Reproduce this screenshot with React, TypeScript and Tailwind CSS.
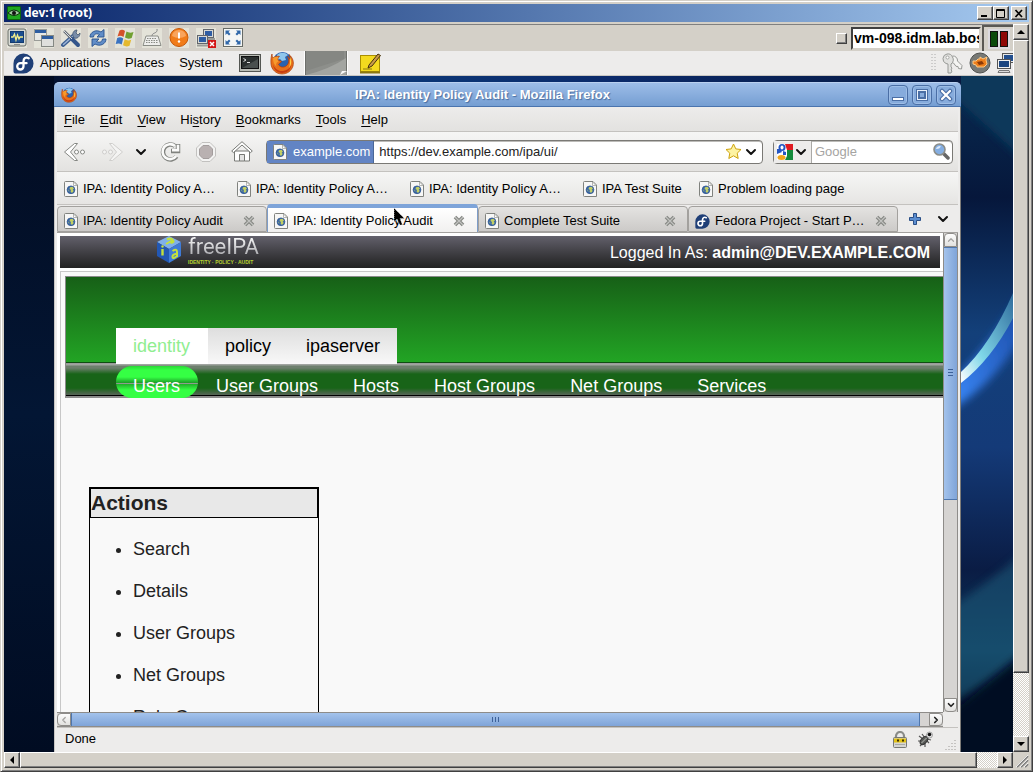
import type { ReactNode } from "react";
import { ChevronDown, ChevronLeft, ChevronRight, ChevronUp } from "lucide-react";

const MENUS = ["File", "Edit", "View", "History", "Bookmarks", "Tools", "Help"];

const BOOKMARKS = [
  { label: "IPA: Identity Policy A…", width: "w-[173px]" },
  { label: "IPA: Identity Policy A…", width: "w-[173px]" },
  { label: "IPA: Identity Policy A…", width: "w-[173px]" },
  { label: "IPA Test Suite", width: "w-[116px]" },
  { label: "Problem loading page", width: "w-[150px]" },
];

const SUB_TABS = ["User Groups", "Hosts", "Host Groups", "Net Groups", "Services"];

const ACTIONS = ["Search", "Details", "User Groups", "Net Groups", "Role Groups"];

const RAISED =
  "bg-[#d4d0c8] border border-t-white border-l-white border-r-[#404040] border-b-[#404040] shadow-[inset_-1px_-1px_0_#808080]";

const DITHER =
  "bg-[repeating-conic-gradient(#ffffff_0_25%,#d4d0c8_0_50%)] bg-[length:2px_2px]";

function PageIcon() {
  return (
    <svg width="14" height="16" viewBox="0 0 14 16" className="shrink-0">
      <path d="M1.5.5h8.500l3.500 3.500v11.500H1.500a1 1 0 0 1-1-1v-13a1 1 0 0 1 1-1z" fill="#f7f7f6" stroke="#80827e" />
      <path d="M9.500 1v3.500h3.500z" fill="#fff" stroke="#a3a5a1" strokeWidth=".8" />
      <circle cx="7" cy="8.800" r="3.900" fill="#3b68a8" stroke="#264f8a" strokeWidth=".7" />
      <path d="M6 6.200l2.500-.4 1.500 1.700-1.300 1 1 1.500-1.700 2-1.500-1.500.5-1.500-1.500-1z" fill="#c3cf63" />
      <path d="M4 8.500l1.200 1v1.500z" fill="#c3cf63" />
    </svg>
  );
}

function FirefoxIcon({ size }: { size: number }) {
  return (
    <svg width={size} height={size} viewBox="0 0 24 24" className="shrink-0">
      <circle cx="12.500" cy="10.500" r="9.500" fill="#2a62b0" />
      <path d="M7 4c3-3 8-3 11 0l-3 2 1 3-4 1-2-2-3 1z" fill="#8fc6ec" />
      <path
        d="M2 3c0 2 .5 3 1 4C5 5 8 5 9.500 5.500 8 6.500 7.500 8 8 9c1 1 3 .5 3.500 1.500-.5 1.500-2.500 1.500-3 3 1 2.500 5 3.500 7.500 1.500 3-2 3.500-6 1.500-9.500 1.500 1 2.500 2 3 3.500 0-2-.5-4-1.500-5.500C23 7 24 11 23 15c-1.500 5-6 8-11 8C6 23 1.500 18.500 1 13 .7 9 1 6 2 3z"
        fill="#e8701a"
        stroke="#a83a0a"
        strokeWidth=".7"
      />
      <path d="M3 13c1 4 5 7.500 10 7 4-.4 7-3 8.500-6.500-.5 5-4.500 8.500-9.500 8.500s-9-4-9-9z" fill="#c63d12" />
      <path d="M20 6c2 4 1.500 8-1 11 1-3 1.300-6 1-11z" fill="#ffd44a" />
      <path d="M3 7c2-1.500 4-1.500 5.500-1C7 8 7 9.500 9 10c-2 1-4 3-2 6-3-2-4-5-4-9z" fill="#f79a2c" />
    </svg>
  );
}

function FedoraIcon({ size }: { size: number }) {
  return (
    <svg width={size} height={size} viewBox="0 0 22 22" className="shrink-0">
      <path d="M11 .500a10.500 10.500 0 1 1 0 21H2.500a2 2 0 0 1-2-2V11A10.500 10.500 0 0 1 11 .500z" fill="#1f3f77" />
      <path
        d="M16.500 5.500c-3.200-1.700-5.500.1-5.500 3.300v5.200a3.300 3.300 0 1 1-3.300-3.300h6.500"
        fill="none"
        stroke="#fff"
        strokeWidth="2.400"
        strokeLinecap="round"
      />
    </svg>
  );
}

function ToolIcon({ label, children }: { label: string; children: ReactNode }) {
  return (
    <button type="button" aria-label={label} className="size-5 bg-[#e4e3d9]">
      <svg width="20" height="20" viewBox="0 0 20 20">
        {children}
      </svg>
    </button>
  );
}

function ViewerToolbar() {
  return (
    <div className="flex h-[26px] shrink-0 items-center bg-[#d4d0c8] pl-[3px]">
      <div className="flex flex-1 gap-[7px]">
        <ToolIcon label="Connection status">
          <rect x="1" y="1" width="18" height="17" rx="2" fill="#d8dbd5" stroke="#666a64" />
          <rect x="3.500" y="3.500" width="13" height="11" fill="#1c4f91" stroke="#123a70" />
          <path d="M4 9h2l1.500-3 1.500 6 1.500-5 1.500 4 1-2h3" fill="none" stroke="#f5ef8a" strokeWidth="1.300" />
          <path d="M7 16.500h6" stroke="#888" />
        </ToolIcon>
        <ToolIcon label="New connection">
          <rect x=".5" y="1.500" width="12" height="11" fill="#e7e7e5" stroke="#9a9c98" />
          <rect x="1" y="2" width="11" height="3" fill="#2d5ca0" />
          <rect x="7.500" y="7.500" width="12" height="11" fill="#dfdfdd" stroke="#858884" />
          <rect x="8" y="8" width="11" height="3" fill="#2d5ca0" />
        </ToolIcon>
        <ToolIcon label="Options">
          <path d="M2 17L12 8" stroke="#3d5f91" strokeWidth="4" strokeLinecap="round" />
          <path d="M2.500 16.500L12 8" stroke="#9db5d8" strokeWidth="1.500" strokeLinecap="round" />
          <path d="M12 8c-1-3 1-6 4-6l-1 3 2 2 2-2c0 4-3 6-6 5z" fill="#788da9" stroke="#42556f" strokeWidth=".8" />
          <path d="M3 3l8 8" stroke="#666d75" strokeWidth="2.500" />
          <path d="M11 11l6 6" stroke="#34568b" strokeWidth="4" strokeLinecap="round" />
          <path d="M3 3l8 8" stroke="#d7dce2" />
        </ToolIcon>
        <ToolIcon label="Refresh">
          <path d="M2 9c0-5 6-8 11-5l3-2.500V9H9l2.500-2.500C8 5 6 6 5.500 9z" fill="#618dc7" stroke="#28518d" strokeWidth=".9" />
          <path d="M18 11c0 5-6 8-11 5l-3 2.500V11h7l-2.500 2.500c3.500 1.500 5.500.5 6-2.500z" fill="#618dc7" stroke="#28518d" strokeWidth=".9" />
        </ToolIcon>
        <ToolIcon label="Send Windows key">
          <path d="M4.500 2.500q3-1.500 5.500.5L8.500 9q-3-2-6-.5z" fill="#d4522b" />
          <path d="M11.500 3.500q3 2 7 .5l-1.800 6q-3.700 1.500-6.700-.5z" fill="#71a032" />
          <path d="M2.200 10q3-1.500 6 .4L6.700 16.500q-2.700-1.800-6-.5z" fill="#3b73c1" />
          <path d="M9.700 11.300q3 2 6.500.5l-1.700 6q-3.300 1.500-6.500-.5z" fill="#e5b92f" />
        </ToolIcon>
        <ToolIcon label="Send keys">
          <path d="M10 8c0-4 6-2 5-7" fill="none" stroke="#888" />
          <path d="M4 8h12l3 9.500H1z" fill="#eeeeec" stroke="#8a8c86" />
          <path d="M5 10.500h10M4 12.500h12M4 14.500h12" stroke="#8a8c86" strokeDasharray="1.500 1" />
        </ToolIcon>
        <ToolIcon label="Ctrl-Alt-Del">
          <circle cx="10" cy="9.500" r="9" fill="#f17c19" stroke="#c45608" />
          <path d="M3 8a7 6 0 0 1 14 0q-7 4-14 0z" fill="#f9a45c" />
          <path d="M10 4.500v6" stroke="#fff" strokeWidth="2" />
          <circle cx="10" cy="13.500" r="1.200" fill="#fff" />
        </ToolIcon>
        <ToolIcon label="Disconnect">
          <rect x="7.500" y="1.500" width="10" height="8" fill="#d8dad6" stroke="#62666c" />
          <rect x="9" y="3" width="7" height="5" fill="#2f5da3" />
          <rect x="1.500" y="7.500" width="10" height="8" fill="#d8dad6" stroke="#62666c" />
          <rect x="3" y="9" width="7" height="5" fill="#2f5da3" />
          <path d="M1 17.500h11M12 11h7" stroke="#9a9c98" strokeWidth="2" />
          <rect x="12" y="12" width="8" height="8" fill="#d31616" />
          <path d="M14 14l4 4m0-4l-4 4" stroke="#fff" strokeWidth="1.500" />
        </ToolIcon>
        <ToolIcon label="Full screen">
          <rect x=".5" y=".5" width="19" height="18" fill="#f4f6f5" stroke="#666a66" />
          <path
            d="M2.500 2.500h4.500l-1.500 1.500 2 2-1.500 1.500-2-2-1.500 1.500zM17.500 2.500h-4.500l1.500 1.500-2 2 1.500 1.500 2-2 1.500 1.500zM2.500 16.500h4.500l-1.500-1.500 2-2-1.500-1.500-2 2-1.500-1.500zM17.500 16.500h-4.500l1.500-1.500-2-2 1.500-1.500 2 2 1.500-1.500z"
            fill="#2f67a9"
          />
        </ToolIcon>
      </div>
      <button type="button" aria-label="Toggle host box" className={`size-[11px] ${RAISED}`} />
      <input
        aria-label="Host"
        defaultValue="vm-098.idm.lab.bos"
        className="ml-1 h-[23px] w-[130px] border-2 border-t-[#404040] border-r-[#d4d0c8] border-b-[#d4d0c8] border-l-[#404040] bg-white pl-px text-[14px] font-bold text-black outline-none"
      />
      <div className="ml-px flex h-full w-[31px] items-center justify-center border-t-2 border-l-2 border-[#5a5853]">
        <svg width="22" height="20" viewBox="0 0 22 20">
          <rect width="22" height="20" fill="#dcdadf" />
          <rect x="2.500" y="2.500" width="7" height="15" fill="#0c4a0c" stroke="#111" />
          <rect x="12.500" y="2.500" width="7" height="15" fill="#8e0808" stroke="#111" />
        </svg>
      </div>
    </div>
  );
}

function GnomePanel() {
  return (
    <div className="flex h-[25px] shrink-0 items-center border-b border-[#c9c7c3] bg-[#edeceb] pl-[9px] text-[13px] text-black">
      <FedoraIcon size={21} />
      <nav className="ml-[6px] flex gap-[15px]">
        <button type="button">Applications</button>
        <button type="button">Places</button>
        <button type="button">System</button>
      </nav>
      <svg width="22" height="18" viewBox="0 0 22 18" className="ml-[17px] shrink-0">
        <rect x=".5" y=".5" width="21" height="17" fill="#babdb6" stroke="#555753" />
        <rect x="2.500" y="2.500" width="17" height="12" fill="#2b302f" stroke="#111" />
        <path d="M3 14L19 5v9z" fill="#4a504e" />
        <path d="M4.500 4.500l2.500 1.500-2.500 1.500M8 8.500h3" fill="none" stroke="#e0e0e0" />
      </svg>
      <div className="ml-[9px]">
        <FirefoxIcon size={24} />
      </div>
      <svg width="44" height="24" viewBox="0 0 44 24" className="ml-[10px] shrink-0">
        <rect width="44" height="24" fill="#8d8f8b" />
        <path d="M2 24Q26 18 42 7v17z" fill="#a3a5a1" />
        <path d="M2 0h38v8Q20 14 2 20z" fill="#858783" />
        <path d="M.5 0v24M43.500 0v24" stroke="#fff" />
        <path d="M1.500 0v24M42.500 0v20" stroke="#6e706c" />
        <path d="M36 24l2-4 5 0z" fill="#f8f8f8" />
      </svg>
      <svg width="24" height="23" viewBox="0 0 24 23" className="ml-[10px] shrink-0">
        <rect x="2.500" y="3.500" width="19" height="16" fill="#f4da1f" stroke="#a98e02" />
        <path d="M2 20.500h20" stroke="#8d7810" strokeWidth="2" />
        <path d="M5 17h9" stroke="#8d7810" />
        <path d="M11 13L20 2l2.500 1.500L14 14l-4 2z" fill="#c99a4b" stroke="#44310c" />
      </svg>
      <div className="flex-1" />
      <svg width="5" height="18" viewBox="0 0 5 18" className="mr-[5px]">
        <path d="M1 0v18M4 0v18" stroke="#aaa" strokeDasharray="1 2" />
      </svg>
      <svg width="22" height="21" viewBox="0 0 22 21" className="mr-[6px]">
        <path d="M11.500 3a4.500 4.500 0 0 1 5 5l4.500 4.500-.5 3.500-3-.5-.5-2-2-.2-2.500-3.300a4.500 4.500 0 0 1-4-2" fill="#f4f4f2" stroke="#979996" />
        <path
          d="M6 1a5 5 0 0 0-1 9.500l2 .5v9h3l1-2-1-1 1-2-1-1v-3a5 5 0 0 0 1.500-7A5 5 0 0 0 6 1z"
          fill="#e1e1df"
          stroke="#979996"
        />
        <circle cx="6.500" cy="4.500" r="1.500" fill="#fff" stroke="#979996" strokeWidth=".8" />
      </svg>
      <svg width="22" height="22" viewBox="0 0 22 22" className="mr-[6px]">
        <circle cx="11" cy="11" r="10" fill="#777975" stroke="#50524f" />
        <path d="M4 9h3l2-2h2V5l3 2 4-2-1 3 1 4-3 3H8l-1-2-3-1z" fill="#ee7f1b" stroke="#ffca83" />
        <path d="M8 10l5-1 2 3-5 1z" fill="#8b3a08" />
      </svg>
      <svg width="16" height="20" viewBox="0 0 16 20">
        <rect x="5.500" y=".5" width="12" height="9" fill="#e8e8e6" stroke="#555" />
        <rect x="7" y="2" width="9" height="6" fill="#234f8e" />
        <rect x=".5" y="6.500" width="13" height="9" fill="#f1f1ef" stroke="#555" />
        <rect x="2" y="8" width="10" height="6" fill="#1c4680" />
        <path d="M2 17.500h10l1 2H1z" fill="#ddd" stroke="#777" />
      </svg>
    </div>
  );
}

function Wallpaper() {
  return (
    <svg
      className="absolute inset-y-0 right-0 h-full w-[52px]"
      viewBox="0 0 52 676"
      preserveAspectRatio="none"
    >
      <defs>
        <linearGradient id="sky" x1="0" y1="0" x2="0" y2="1">
          <stop offset="0" stopColor="#082c52" />
          <stop offset=".18" stopColor="#06173b" />
          <stop offset=".38" stopColor="#13407a" />
          <stop offset=".55" stopColor="#143a78" />
          <stop offset=".73" stopColor="#0a1c44" />
          <stop offset=".85" stopColor="#0d3c5c" />
          <stop offset=".94" stopColor="#020d24" />
          <stop offset="1" stopColor="#010b20" />
        </linearGradient>
        <linearGradient id="arc" x1="0" y1="1" x2="1" y2="0">
          <stop offset="0" stopColor="#ffffff" />
          <stop offset=".35" stopColor="#7fd6e8" />
          <stop offset="1" stopColor="#2f6c9c" />
        </linearGradient>
        <linearGradient id="glow" x1="0" y1="1" x2="1" y2="0">
          <stop offset="0" stopColor="#3d8dff" />
          <stop offset="1" stopColor="#153f95" />
        </linearGradient>
        <filter id="soft" x="-20%" y="-20%" width="140%" height="140%">
          <feGaussianBlur stdDeviation="4" />
        </filter>
      </defs>
      <rect width="52" height="676" fill="url(#sky)" />
      <path d="M-15 -15H70V90L-15 14z" fill="#07385a" filter="url(#soft)" />
      <path d="M-15 312Q30 270 70 200V245Q35 310-15 336z" fill="url(#glow)" filter="url(#soft)" />
      <path d="M0 296Q30 268 52 217V242Q30 284 0 307z" fill="url(#arc)" />
      <path d="M-15 535Q30 505 70 470V570Q30 605-15 630z" fill="#1d5878" opacity=".6" filter="url(#soft)" />
      <path d="M-15 642L70 572V690H-15z" fill="#020c22" filter="url(#soft)" />
    </svg>
  );
}

function FirefoxTitleBar() {
  const button =
    "flex size-5 items-center justify-center rounded-[4px] border border-[#4a6ea5] bg-[#86abdc] shadow-[inset_0_0_0_1px_#9dbde6]";
  return (
    <div className="flex h-[25px] shrink-0 items-center rounded-t-[5px] border-t border-b border-t-[#b9d0f0] border-b-[#4a74ae] bg-linear-to-b from-[#9dbde8] to-[#759ed2] pr-[5px] pl-[7px]">
      <FirefoxIcon size={16} />
      <h1 className="flex-1 text-center text-[13px] font-bold text-white [text-shadow:1px_1px_1px_#466c9f]">
        IPA: Identity Policy Audit - Mozilla Firefox
      </h1>
      <div className="flex gap-1">
        <button type="button" aria-label="Minimize window" className={button}>
          <svg width="14" height="14" viewBox="0 0 14 14">
            <rect x="1.500" y="9.500" width="11" height="3" fill="#fff" stroke="#4a6ea5" />
          </svg>
        </button>
        <button type="button" aria-label="Maximize window" className={button}>
          <svg width="14" height="14" viewBox="0 0 14 14" fill="none">
            <rect x="2.500" y="2.500" width="9" height="9" stroke="#4a6ea5" strokeWidth="3" />
            <rect x="2.500" y="2.500" width="9" height="9" stroke="#e9f1fb" />
            <rect x="4.500" y="4.500" width="5" height="5" stroke="#4a6ea5" />
          </svg>
        </button>
        <button type="button" aria-label="Close window" className={button}>
          <svg width="14" height="14" viewBox="0 0 14 14">
            <path d="M3 3l8 8m0-8l-8 8" stroke="#4a6ea5" strokeWidth="4.500" strokeLinecap="round" />
            <path d="M3 3l8 8m0-8l-8 8" stroke="#fff" strokeWidth="2.200" strokeLinecap="round" />
          </svg>
        </button>
      </div>
    </div>
  );
}

function MenuBar() {
  return (
    <nav className="flex h-[25px] shrink-0 items-center gap-[15px] border-b border-[#c4c2bf] bg-linear-to-b from-[#edeceb] to-[#e3e2e0] pt-px pl-[7px]">
      {MENUS.map((menu) => {
        const at = menu === "History" ? 2 : 0;
        return (
          <button key={menu} type="button">
            {menu.slice(0, at)}
            <span className="underline underline-offset-2">{menu[at]}</span>
            {menu.slice(at + 1)}
          </button>
        );
      })}
    </nav>
  );
}

function NavBar() {
  return (
    <div className="flex h-10 shrink-0 items-center border-b border-[#c4c2bf] bg-linear-to-b from-[#f6f6f5] to-[#e3e2e0] pr-[5px] pl-[7px]">
      <button type="button" aria-label="Back">
        <svg width="22" height="20" viewBox="0 0 22 20" fill="#fff" stroke="#868884">
          <path d="M10.500 1.500h3L6.500 10l7 8.500h-3L.5 10z" />
          <circle cx="12.500" cy="10" r="2" />
          <circle cx="18.500" cy="10" r="2" />
        </svg>
      </button>
      <button type="button" aria-label="Forward" className="ml-[15px]">
        <svg width="22" height="20" viewBox="0 0 22 20" fill="#f4f4f3" stroke="#cfcecc">
          <path d="M11.500 1.500h-3l7 8.500-7 8.500h3L21.500 10z" />
          <circle cx="9.500" cy="10" r="2" />
          <circle cx="3.500" cy="10" r="2" />
        </svg>
      </button>
      <button type="button" aria-label="History menu" className="ml-[10px]">
        <ChevronDown size={16} strokeWidth={3} color="#111" />
      </button>
      <button type="button" aria-label="Reload" className="ml-[11px]">
        <svg width="21" height="20" viewBox="0 0 21 20">
          <path d="M15 4a7.500 7.500 0 1 0 1.500 10.500M18 2v7h-7" fill="none" stroke="#80827e" strokeWidth="4.500" />
          <path d="M15 4a7.500 7.500 0 1 0 1.200 10M18 2.800v5.500h-6" fill="none" stroke="#fbfbfa" strokeWidth="2.600" />
        </svg>
      </button>
      <button type="button" aria-label="Stop" className="ml-[15px]">
        <svg width="20" height="20" viewBox="0 0 20 20">
          <path d="M6 .500h8L19.500 6v8L14 19.500H6L.5 14V6z" fill="#f3f3f2" stroke="#c2c1bf" />
          <path d="M7 3.500h6L16.500 7v6L13 16.500H7L3.500 13V7z" fill="#b9b1b1" stroke="#a39d9d" />
        </svg>
      </button>
      <button type="button" aria-label="Home" className="ml-[15px]">
        <svg width="22" height="21" viewBox="0 0 22 21" fill="#fff" stroke="#777975">
          <path d="M3.500 10h15v10h-5v-6h-5v6h-5z" />
          <path d="M11 .700l10.300 9.300-1.800 1.600L11 4l-8.500 7.600L.700 10z" />
          <path d="M8.500 20v-6.500h5V20z" fill="#e4e4e3" />
        </svg>
      </button>
      <div className="ml-[13px] flex h-6 flex-1 items-center rounded-[4px] border border-[#7a7975] bg-white pr-[3px] shadow-[inset_0_1px_0_#bcbbb8]">
        <span className="flex h-full items-center gap-[6px] border-r border-[#4a6797] bg-[#6284c4] pr-[3px] pl-[6px] text-white">
          <PageIcon />
          example.com
        </span>
        <input
          aria-label="Location"
          defaultValue="https://dev.example.com/ipa/ui/"
          className="w-0 flex-1 bg-transparent pl-[5px] text-[#222] outline-none"
        />
        <svg width="17" height="17" viewBox="0 0 17 17">
          <path
            d="M8.500 1l2.300 4.900 5.200.6-3.800 3.700 1 5.300-4.700-2.700-4.700 2.700 1-5.300L1 6.500l5.200-.6z"
            fill="#fdf3a3"
            stroke="#cda20c"
          />
        </svg>
        <ChevronDown size={16} strokeWidth={3} color="#111" className="ml-px" />
      </div>
      <div className="ml-[10px] flex h-6 w-[180px] items-center rounded-[4px] border border-[#7a7975] bg-white pr-[2px] shadow-[inset_0_1px_0_#bcbbb8]">
        <button
          type="button"
          aria-label="Search engine"
          className="flex h-full items-center border-r border-[#aaa9a6] bg-[#edeceb] pr-[2px] pl-[3px]"
        >
          <svg width="16" height="16" viewBox="0 0 16 16">
            <rect width="16" height="16" fill="#fff" />
            <path d="M8 0h8v6H10z" fill="#e01b22" />
            <path d="M10 6h6v10H8l2-4z" fill="#138a3b" />
            <path d="M0 5h3l2 3-5 2z" fill="#2456c4" />
            <ellipse cx="5" cy="3.500" rx="3.500" ry="3.500" fill="#2456c4" />
            <ellipse cx="5" cy="3.500" rx="1.500" ry="2" fill="#fff" />
            <path d="M6 7l3 1v3H6z" fill="#2456c4" />
            <ellipse cx="4.500" cy="13.500" rx="4" ry="2.500" fill="#f2a71b" />
          </svg>
          <ChevronDown size={16} strokeWidth={3} color="#111" />
        </button>
        <input
          aria-label="Search the web"
          placeholder="Google"
          className="w-0 flex-1 bg-transparent pl-[3px] outline-none placeholder:text-[#a5a4a2]"
        />
        <svg width="17" height="17" viewBox="0 0 17 17">
          <path d="M10 10l5 5" stroke="#666" strokeWidth="3.500" strokeLinecap="round" />
          <circle cx="6.500" cy="6.500" r="5.500" fill="#84aee2" stroke="#8b8d89" strokeWidth="1.600" />
          <path d="M3 6a3.500 3.500 0 0 1 5-2.500q-2 3-5 2.500z" fill="#dceafb" />
        </svg>
      </div>
    </div>
  );
}

function CloseTab() {
  return (
    <svg width="12" height="12" viewBox="0 0 12 12" className="shrink-0">
      <path d="M2 2l8 8m0-8l-8 8" stroke="#858783" strokeWidth="3.600" />
      <path d="M2 2l8 8m0-8l-8 8" stroke="#c2c3c0" strokeWidth="1.200" />
    </svg>
  );
}

function Tab({ label, icon, active }: { label: string; icon: ReactNode; active?: boolean }) {
  return (
    <button
      type="button"
      role="tab"
      aria-selected={!!active}
      className={
        active
          ? "relative flex h-[28px] w-[211px] items-center rounded-t-[4px] border-x border-t-4 border-x-[#7d9cc8] border-t-[#7ea4d9] bg-linear-to-b from-white to-[#f1f0ef] px-[6px] pt-px"
          : "flex h-[26px] w-[210px] items-center rounded-t-[4px] border border-[#a3a19e] bg-linear-to-b from-[#e4e3e1] to-[#cccac8] px-[6px] pt-1"
      }
    >
      {icon}
      <span className="ml-[5px] w-[160px] text-left whitespace-nowrap">{label}</span>
      <CloseTab />
      {active && (
        <svg width="12" height="20" viewBox="0 0 12 20" className="absolute top-0 left-[125px]">
          <path d="M1 0v14l3-3 3 6h2.500L7 10.500h4.500z" fill="#000" stroke="#fff" strokeWidth=".6" strokeDasharray="1 1" />
        </svg>
      )}
    </button>
  );
}

function TabStrip() {
  return (
    <div className="flex h-[28px] shrink-0 items-end border-b border-[#a3a19e] bg-[#edeceb]">
      <div role="tablist" className="flex items-end">
        <Tab label="IPA: Identity Policy Audit" icon={<PageIcon />} />
        <Tab label="IPA: Identity Policy Audit" icon={<PageIcon />} active />
        <Tab label="Complete Test Suite" icon={<PageIcon />} />
        <Tab label="Fedora Project - Start P…" icon={<FedoraIcon size={15} />} />
      </div>
      <button type="button" aria-label="New tab" className="mb-[7px] ml-[11px]">
        <svg width="12" height="12" viewBox="0 0 12 12">
          <path d="M4.500.500h3v4h4v3h-4v4h-3v-4h-4v-3h4z" fill="#5c8ed0" stroke="#2b4f86" />
        </svg>
      </button>
      <button type="button" aria-label="List all tabs" className="mb-[5px] ml-[14px]">
        <ChevronDown size={16} strokeWidth={3} color="#111" />
      </button>
    </div>
  );
}

function FreeIpaLogo() {
  return (
    <div className="flex items-start">
      <svg width="26" height="28" viewBox="0 0 26 28">
        <path d="M13 0l12 6-12 7L1 6z" fill="#7fb0ea" />
        <path d="M1 6l12 7v14L1 20z" fill="#2257b4" />
        <path d="M25 6l-12 7v14l12-7z" fill="#3f7bd6" />
        <path d="M10 8l7-4M11 3.500q4-2 6 .5t-2.500 3" fill="none" stroke="#c3e03c" strokeWidth="2" />
        <path d="M6.500 13v6.500" stroke="#c3e03c" strokeWidth="2.400" />
        <circle cx="6.500" cy="10.500" r="1.200" fill="#c3e03c" />
        <path d="M16.500 15q4.500-3 4.500 1v5M21 17.500q-5 1-4.500 3.500t4.500-1" fill="none" stroke="#c3e03c" strokeWidth="2" />
      </svg>
      <div className="ml-[6px] flex flex-col">
        <span className="bg-linear-to-b from-white to-[#a0a0a5] bg-clip-text font-['Roboto',sans-serif] text-[22px] leading-[22px] text-transparent">
          freeIPA
        </span>
        <span className="mt-px text-[5px] leading-[6px] font-bold whitespace-nowrap text-[#b7d22f]">
          IDENTITY · POLICY · AUDIT
        </span>
      </div>
    </div>
  );
}

function WebPage() {
  return (
    <main className="min-w-0 flex-1 overflow-hidden bg-white p-[3px] text-[18px] text-[#222]">
      <header className="flex h-8 items-start bg-linear-to-b from-[#63616c] to-[#222222] pr-[10px] pl-24">
        <FreeIpaLogo />
        <p className="flex-1 text-right text-[16px] leading-[34px] text-white">
          Logged In As: <strong>admin@DEV.EXAMPLE.COM</strong>
        </p>
      </header>
      <div className="mt-[3px] -mr-[3px] border-t border-l border-[#c8c8c8] bg-[#f9f9f9] pt-1 pl-1">
        <div className="border-t border-l border-[#8a8a8a]">
          <div className="flex h-[87px] items-end bg-[linear-gradient(#176017,#22a424_85px,#0f4d12_85px,#0f4d12_86px,#9a9a9a_86px)] pl-[50px]">
            <ul className="flex h-9 bg-linear-to-b from-[#dedede] to-[#f8f8f8] leading-9 text-black">
              <li className="bg-white pr-[18px] pl-[17px] text-[#90ee90]">
                <a href="#identity">identity</a>
              </li>
              <li className="pr-[18px] pl-[17px]">
                <a href="#policy">policy</a>
              </li>
              <li className="px-[17px]">
                <a href="#ipaserver">ipaserver</a>
              </li>
            </ul>
          </div>
          <div className="flex h-[34px] items-end bg-[linear-gradient(#a0a4a0_1px,#6d7f6d_2px,#6d7f6d_4px,#186418_10px,#186418_24px,#586458_31px,#000_31px,#000_32px,#8c8c8c_32px)] pl-[50px]">
            <ul className="flex h-8 leading-[40px] text-white">
              <li className="h-8 rounded-full bg-[linear-gradient(#2ad636,#35ff44_4px,#35ff44_11px,#1d9a28_17px,#8f9a8f_17px,#8f9a8f_18px,#1fae2a_18px,#35ff44_24px)] pr-[18px] pl-[17px]">
                <a href="#users">Users</a>
              </li>
              {SUB_TABS.map((tab) => (
                <li key={tab} className="pr-[17px] pl-[18px]">
                  <a href="#sub">{tab}</a>
                </li>
              ))}
            </ul>
          </div>
        </div>
        <section className="mt-[89px] ml-6 w-[230px] border border-black">
          <h2 className="border border-black bg-[#e8e8e8] text-[21px] leading-[28px] font-bold">Actions</h2>
          <ul className="list-disc pt-[10px] pl-[43px] leading-[42px]">
            {ACTIONS.map((action) => (
              <li key={action}>
                <a href="#action">{action}</a>
              </li>
            ))}
          </ul>
        </section>
      </div>
    </main>
  );
}

const GTK_BUTTON =
  "flex shrink-0 items-center justify-center border border-[#8e8c89] bg-linear-to-b from-[#fdfdfd] to-[#e2e1df]";

function FirefoxWindow() {
  return (
    <div className="relative flex min-h-0 flex-1 flex-col text-[13px] text-black">
      <FirefoxTitleBar />
      <div className="flex min-h-0 flex-1 flex-col border-r border-l border-r-[#7d7b78] border-l-[#c9c7c4] bg-[#edeceb] px-[2px]">
        <MenuBar />
        <NavBar />
        <nav className="flex h-[33px] shrink-0 items-center border-b border-[#c4c2bf] bg-linear-to-b from-[#f6f6f5] to-[#e6e5e3] pt-px pl-[7px]">
          {BOOKMARKS.map((bookmark, i) => (
            <a key={i} href="#bookmark" className={`flex items-center gap-[5px] whitespace-nowrap ${bookmark.width}`}>
              <PageIcon />
              {bookmark.label}
            </a>
          ))}
        </nav>
        <TabStrip />
        <div className="flex min-h-0 flex-1">
          <WebPage />
          <div className="flex w-[15px] flex-col border-x border-[#8e8c89] bg-[#d6d4d2]">
            <button type="button" aria-label="Scroll up" className={`h-[14px] rounded-t-[4px] ${GTK_BUTTON}`}>
              <ChevronUp size={10} strokeWidth={3} color="#a5a4a2" />
            </button>
            <div className="flex min-h-0 flex-1 flex-col">
              <div className="flex h-[56%] items-center justify-center border-y border-[#4f77ae] bg-linear-to-r from-[#a4c3ec] to-[#7fa4d8]">
                <svg width="5" height="8" viewBox="0 0 5 8">
                  <path d="M0 .500h5M0 3.500h5M0 6.500h5" stroke="#3d6199" />
                </svg>
              </div>
            </div>
            <button type="button" aria-label="Scroll down" className={`h-[14px] rounded-b-[4px] ${GTK_BUTTON}`}>
              <ChevronDown size={10} strokeWidth={4} color="#222" />
            </button>
          </div>
        </div>
        <div className="mr-[15px] flex h-[15px] shrink-0 border-y border-[#8e8c89] bg-[#d6d4d2]">
          <button type="button" aria-label="Scroll left" className={`w-[14px] rounded-l-[4px] ${GTK_BUTTON}`}>
            <ChevronLeft size={10} strokeWidth={3} color="#a5a4a2" />
          </button>
          <div className="flex flex-1">
            <div className="flex w-[99%] items-center justify-center border-x border-[#4f77ae] bg-linear-to-b from-[#a4c3ec] to-[#7fa4d8]">
              <svg width="8" height="5" viewBox="0 0 8 5">
                <path d="M.5 0v5M3.500 0v5M6.500 0v5" stroke="#3d6199" />
              </svg>
            </div>
          </div>
          <button type="button" aria-label="Scroll right" className={`w-[14px] rounded-r-[4px] ${GTK_BUTTON}`}>
            <ChevronRight size={10} strokeWidth={4} color="#222" />
          </button>
        </div>
        <footer className="flex h-[25px] shrink-0 items-center border-t border-[#c4c2bf] pb-[2px] pl-2">
          <span className="flex-1">Done</span>
          <svg width="16" height="17" viewBox="0 0 16 17">
            <path d="M4 8V5a4 4 0 0 1 8 0v3" fill="none" stroke="#8a8c88" strokeWidth="2.200" />
            <rect x="1.500" y="6.500" width="13" height="10" rx="1" fill="#d6d6d3" stroke="#777975" />
            <path d="M2 8.500h12M2 10.500h12" stroke="#e3c214" strokeWidth="2" />
            <path d="M5 9.500h2M10 9.500h2" stroke="#3b3206" strokeWidth="2" />
            <path d="M3 13.500h10" stroke="#a9aaa7" />
          </svg>
          <svg width="17" height="17" viewBox="0 0 17 17" className="ml-[9px]">
            <path d="M2 5l4 3M1 10h4M3 15l3-3M8 16v-4M12 12l-2-2M5 3l3 4M14 9l-4-1" stroke="#555" strokeWidth="1.200" />
            <ellipse cx="7" cy="9.500" rx="2.800" ry="4.800" transform="rotate(42 7 9.500)" fill="#5a5c59" stroke="#333" />
            <path d="M4.500 12l5-5" stroke="#b5b7b3" />
            <circle cx="12.500" cy="4" r="3" fill="#e2e2e2" stroke="#777" strokeWidth=".6" />
            <circle cx="12.500" cy="3.500" r="1.800" fill="#111" />
          </svg>
          <svg width="11" height="11" viewBox="0 0 11 11" className="mt-[10px] mr-[2px] ml-[11px]">
            <path d="M.5 10.500h11M3.500 7.500h8M6.500 4.500h5M9.500 1.500h2" stroke="#9c9a97" strokeDasharray="1 2" />
          </svg>
        </footer>
      </div>
    </div>
  );
}

function ViewerTitleBar() {
  const button = `flex h-[14px] w-4 items-center justify-center ${RAISED}`;
  return (
    <div className="mb-[2px] flex h-[18px] shrink-0 items-center bg-linear-to-r from-[#0a246a] to-[#a6caf0] pr-[2px] pl-[3px]">
      <svg width="14" height="14" viewBox="0 0 14 14">
        <rect x=".5" y=".5" width="13" height="13" rx="1" fill="#1fa81f" stroke="#0b650b" />
        <path d="M1 7q6-6 12 0-6 5-12 0z" fill="#9fc79f" stroke="#0c2e0c" />
        <circle cx="7" cy="7" r="2" fill="#111" />
      </svg>
      <span className="ml-[3px] flex-1 font-['Noto_Sans',sans-serif] text-[12px] leading-[18px] font-bold text-white">
        dev:1 (root)
      </span>
      <button type="button" aria-label="Minimize" className={button}>
        <svg width="10" height="9" viewBox="0 0 10 9">
          <rect x="1" y="6" width="6" height="2" />
        </svg>
      </button>
      <button type="button" aria-label="Maximize" className={button}>
        <svg width="10" height="9" viewBox="0 0 10 9">
          <path d="M.5.500h8v8h-8zM.5 1.500h8" fill="none" stroke="#000" />
        </svg>
      </button>
      <button type="button" aria-label="Close" className={`ml-[2px] ${button}`}>
        <svg width="10" height="9" viewBox="0 0 10 9">
          <path d="M1.500 1l6.500 7M8 1L1.500 8" stroke="#000" strokeWidth="1.700" />
        </svg>
      </button>
    </div>
  );
}

export default function App() {
  const arrow = `flex size-4 shrink-0 items-center justify-center ${RAISED}`;
  return (
    <div className="flex h-screen w-full flex-col overflow-hidden border border-t-[#d4d0c8] border-r-[#404040] border-b-[#404040] border-l-[#d4d0c8] bg-[#d4d0c8] p-[3px] font-['Liberation_Sans',Arial,sans-serif] shadow-[inset_1px_1px_0_#fff,inset_-1px_-1px_0_#808080]">
      <ViewerTitleBar />
      <div className="flex min-h-0 flex-1">
        <div className="flex min-w-0 flex-1 flex-col border-t border-[#808080]">
          <ViewerToolbar />
          <GnomePanel />
          <div className="relative flex min-h-0 flex-1 flex-col overflow-hidden bg-[linear-gradient(to_right,#020d26,#04112f_50px,#0b3a7a_345px,#0b2a6a_60%,#06173b)] pt-[6px] pr-[52px] pl-[50px]">
            <div className="absolute inset-y-0 left-0 w-[50px] bg-linear-to-b from-[#020b20] via-[#031634] to-[#010c22]" />
            <Wallpaper />
            <FirefoxWindow />
          </div>
        </div>
        <div className={`flex w-4 flex-col ${DITHER}`}>
          <button type="button" aria-label="Scroll screen up" className={arrow}>
            <svg width="8" height="4" viewBox="0 0 8 4">
              <path d="M4 0l4 4H0z" />
            </svg>
          </button>
          <div className="min-h-0 flex-1">
            <div className={`h-[91%] ${RAISED}`} />
          </div>
          <button type="button" aria-label="Scroll screen down" className={arrow}>
            <svg width="8" height="4" viewBox="0 0 8 4">
              <path d="M0 0h8L4 4z" />
            </svg>
          </button>
        </div>
      </div>
      <div className="flex h-4 shrink-0">
        <div className={`flex flex-1 ${DITHER}`}>
          <button type="button" aria-label="Scroll screen left" className={arrow}>
            <svg width="4" height="8" viewBox="0 0 4 8">
              <path d="M4 0v8L0 4z" />
            </svg>
          </button>
          <div className="flex flex-1">
            <div className={`w-[98%] ${RAISED}`} />
          </div>
          <button type="button" aria-label="Scroll screen right" className={arrow}>
            <svg width="4" height="8" viewBox="0 0 4 8">
              <path d="M0 0l4 4-4 4z" />
            </svg>
          </button>
        </div>
        <svg width="16" height="16" viewBox="0 0 16 16">
          <path d="M4 15L15 4M8 15l7-7M12 15l3-3" stroke="#808080" strokeWidth="1.800" />
          <path d="M3 15L15 3M7 15l8-8M11 15l4-4" stroke="#fff" strokeWidth=".8" />
        </svg>
      </div>
    </div>
  );
}
